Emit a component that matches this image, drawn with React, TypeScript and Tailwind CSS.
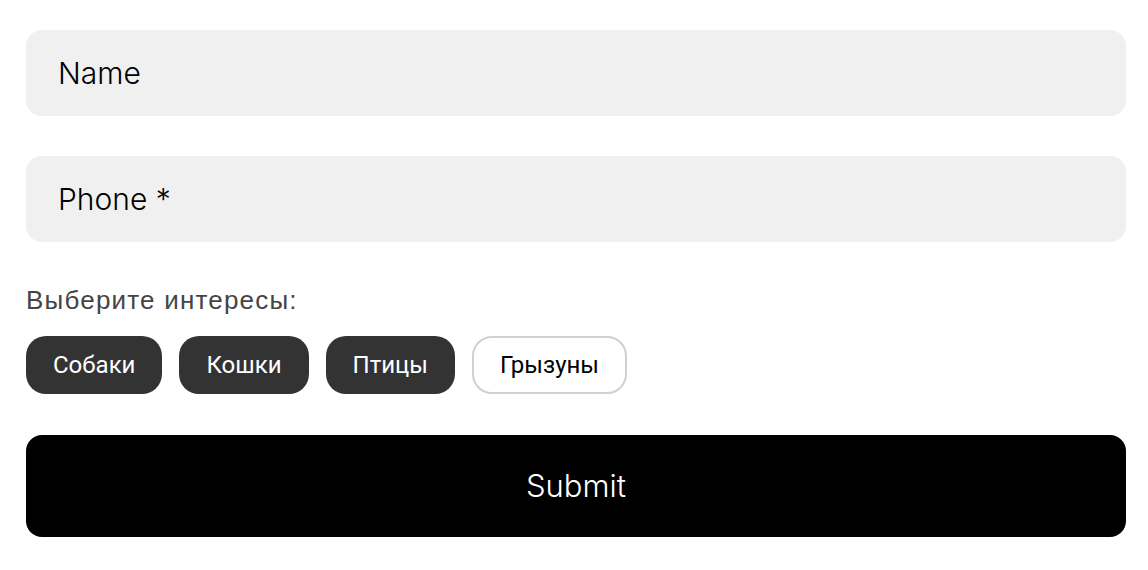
import React from "react";

export default function App() {
  const chips = [
    { label: "Собаки", active: true },
    { label: "Кошки", active: true },
    { label: "Птицы", active: true },
    { label: "Грызуны", active: false },
  ];
  return (
    <div className="bg-white w-[1148px] h-[570px] pl-[26px] pt-[30px]">
      <div className="flex flex-col w-[1100px]">
        <div className="h-[86px] rounded-[16px] bg-[#f0f0f0] flex items-center px-[32px] text-[30px] font-light text-black font-[Inter,sans-serif]">
          Name
        </div>
        <div className="h-[86px] mt-[40px] rounded-[16px] bg-[#f0f0f0] flex items-center px-[32px] text-[30px] font-light text-black font-[Inter,sans-serif]">
          Phone *
        </div>
        <div className="mt-[43px] text-[26px] leading-[30px] tracking-[1.2px] text-[#444] font-['Liberation_Sans',Arial,sans-serif]">
          Выберите интересы:
        </div>
        <div className="flex gap-[17px] mt-[21px]">
          {chips.map((c) => (
            <div
              key={c.label}
              className={
                c.active
                  ? "h-[58px] px-[27px] rounded-[20px] bg-[#333] text-white flex items-center text-[24px] font-[Roboto,sans-serif]"
                  : "h-[58px] px-[26px] rounded-[20px] bg-white border-2 border-[#d0d0d0] text-black flex items-center text-[24px] font-[Roboto,sans-serif]"
              }
            >
              {c.label}
            </div>
          ))}
        </div>
        <div className="mt-[41px] h-[102px] rounded-[16px] bg-black text-white flex items-center justify-center text-[31px] font-light font-[Inter,sans-serif]">
          Submit
        </div>
      </div>
    </div>
  );
}
